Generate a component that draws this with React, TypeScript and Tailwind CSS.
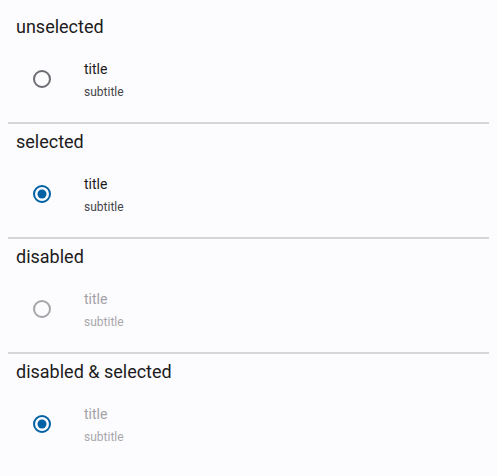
import React from 'react';

type Item = { label: string; selected: boolean; disabled: boolean };

const items: Item[] = [
  { label: 'unselected', selected: false, disabled: false },
  { label: 'selected', selected: true, disabled: false },
  { label: 'disabled', selected: false, disabled: true },
  { label: 'disabled & selected', selected: true, disabled: true },
];

function Radio({ selected, disabled }: { selected: boolean; disabled: boolean }) {
  const ring = selected ? '#0061a4' : disabled ? '#a4a5a9' : '#6b6d72';
  return (
    <svg width="20" height="20" viewBox="0 0 20 20">
      <circle cx="10" cy="10" r="8" fill="none" stroke={ring} strokeWidth="2" />
      {selected && <circle cx="10" cy="10" r="4.5" fill="#0061a4" />}
    </svg>
  );
}

export default function App() {
  return (
    <div className="min-h-screen w-full bg-[#fcfbfe] pt-2 font-['Roboto',sans-serif]">
      {items.map((item, i) => (
        <div key={item.label}>
          <div className="h-[114px]">
            <div className="h-[30px] px-4 pt-[7px] text-[18px] leading-[24px] text-[#1d1b20]">{item.label}</div>
            <div className="mt-[9px] flex h-[64px] items-center">
              <div className="flex w-[84px] justify-start pl-[32px]">
                <Radio selected={item.selected} disabled={item.disabled} />
              </div>
              <div className="flex flex-col">
                <span className={`text-[14px] leading-[20px] ${item.disabled ? 'text-[#a3a3a6]' : 'text-[#1d1b20]'}`}>title</span>
                <span className={`mt-[5px] text-[12px] leading-[16px] ${item.disabled ? 'text-[#a8a8ab]' : 'text-[#46464a]'}`}>subtitle</span>
              </div>
            </div>
          </div>
          {i < items.length - 1 && <div className="mx-2 -mb-px h-[2px] bg-[#d6d6d9]" />}
        </div>
      ))}
    </div>
  );
}
